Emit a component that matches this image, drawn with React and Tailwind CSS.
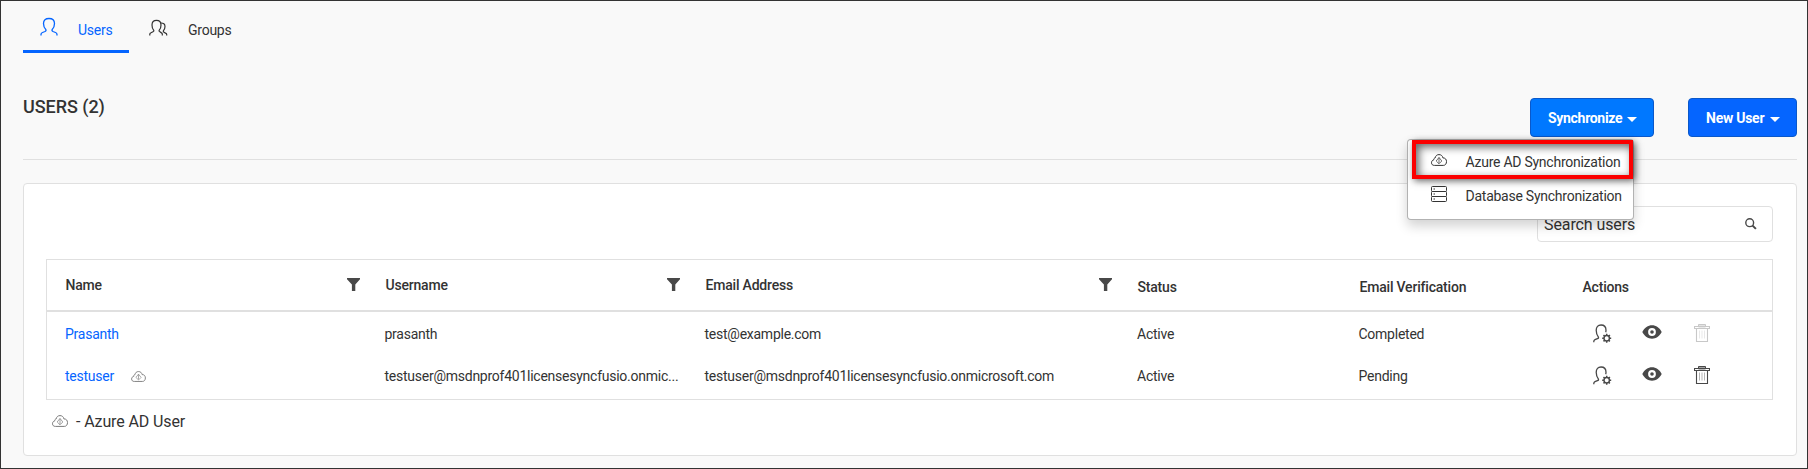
import React from "react";

function UserIcon({ className }) {
  return (
    <svg className={className} width="18" height="20" viewBox="0 0 18 20" fill="none" stroke="currentColor" strokeWidth="1.3">
      <path d="M1 18.600V17.400q0-1.300 1.500-1.900l2.500-1q1.600-.8.800-2C4.600 11.300 3.500 9.500 3.500 6.500 3.500 3 5.500 1.500 9 1.500S14.500 3 14.500 6.500c0 3-1.100 4.800-2.300 6q-.8 1.200.8 2l2.500 1q1.500.6 1.500 1.900v1.200" />
    </svg>
  );
}

function GroupIcon({ className }) {
  return (
    <svg className={className} width="19" height="18" viewBox="0 0 19 18" fill="none" stroke="currentColor" strokeWidth="1.2">
      <path d="M.8 16.500v-1.200q0-1 1.200-1.500l2-1q1.300-.6.6-1.700C3.600 10 3 8.500 3 6 3 2.800 4.600 1.300 7.500 1.300S12 2.800 12 6c0 2.500-.7 4-1.700 5.100q-.7 1.100.6 1.700l1.200.8q1.200.5 1.200 1.500v1.400" />
      <path d="M11.500 4c3-.2 4.500 1 4.500 3.600 0 1.800-.6 3-1.500 4q-.6 1 .5 1.600l1.500.9q1.200.5 1.200 1.300v1.100" />
    </svg>
  );
}

function CloudIcon({ className }) {
  return (
    <svg className={className} viewBox="0 0 16 12" fill="none" stroke="currentColor" strokeWidth="1">
      <path d="M3.400 11.400C1.500 11.400.5 10.300.5 8.800c0-1.600.9-2.700 2.300-2.900-.2-1 .3-1.800 1.400-2C4.600 1.700 6 .6 8 .6s3.600 1.200 3.900 3.300c2.300-.1 3.600 1.500 3.600 3.700s-1.200 3.800-3.200 3.800z" />
      <path d="M8 3.400 5.200 7 8 9.800 10.800 7zM8 3.800v5.400" strokeWidth=".7" />
    </svg>
  );
}

function DatabaseIcon({ className }) {
  return (
    <svg className={className} width="16" height="16" viewBox="0 0 16 16" fill="none" stroke="currentColor">
      <rect x=".5" y=".5" width="15" height="5" rx="1" />
      <rect x=".5" y="5.500" width="15" height="5" rx="1" />
      <rect x=".5" y="10.500" width="15" height="5" rx="1" />
      <path d="M2.500 3h1.500M2.500 8h1.500M2.500 13h1.500" />
    </svg>
  );
}

function SearchIcon({ className }) {
  return (
    <svg className={className} width="12" height="12" viewBox="0 0 12 12" fill="none" stroke="currentColor">
      <circle cx="4.700" cy="4.700" r="3.900" strokeWidth="1.400" />
      <path d="m7.600 7.600 3.300 3.300" strokeWidth="2" />
    </svg>
  );
}

function FilterIcon() {
  return (
    <svg className="mb-0.5 text-[#484848]" width="13" height="13" viewBox="0 0 13 13" fill="currentColor">
      <path d="M0 0h13v1.200L8.300 6.500V13H4.900V6.500L0 1.200z" />
    </svg>
  );
}

function UserGearIcon() {
  return (
    <svg width="19" height="19" viewBox="0 0 19 19" fill="none" stroke="currentColor" strokeWidth="1.3">
      <path d="M.8 18.300v-.9q0-1.200 1.200-1.700l2.400-1q1.700-.7.900-1.900C4.300 11.500 3.200 9.800 3.200 6.300 3.200 3 5 1 8 1s5 2 5 5.300q0 1-.3 2" />
      <circle cx="13.700" cy="14.200" r="2.700" strokeWidth="1.400" />
      <path d="M13.700 9.700v1.700M13.700 17v1.700M9.200 14.200h1.700M16.500 14.200h1.700M10.500 11l1.200 1.200M15.700 16.200l1.200 1.200M16.900 11l-1.200 1.200M11.700 16.200l-1.200 1.200" strokeWidth="1.500" />
    </svg>
  );
}

function EyeIcon() {
  return (
    <svg width="20" height="14" viewBox="0 0 20 14">
      <path d="M.3 7C2.500 2.700 6 .3 10 .3S17.500 2.700 19.700 7C17.500 11.300 14 13.700 10 13.700S2.500 11.300.3 7z" fill="currentColor" />
      <circle cx="10" cy="7" r="3.900" fill="#fff" />
      <circle cx="10" cy="7" r="1.800" fill="currentColor" />
    </svg>
  );
}

function TrashIcon({ className }) {
  return (
    <svg className={className} width="16" height="18" viewBox="0 0 16 18" fill="none" stroke="currentColor">
      <path d="M4.500.5h7v2.400h-7z" fill="currentColor" fillOpacity=".5" />
      <path d="M.5 2.500h15v2H.5zM2.500 4.500v13h11v-13" strokeWidth="1.100" />
      <path d="M5.500 6.500v8M8 6.500v8M10.500 6.500v8" strokeWidth=".8" strokeOpacity=".5" />
    </svg>
  );
}

function Caret({ className }) {
  return <span className={`h-0 w-0 border-x-[5px] border-t-[5px] border-x-transparent border-t-white ${className}`} />;
}

const GRID = "grid grid-cols-[319px_320px_432px_222px_223px_1fr]";

const columns = [
  { label: "Name", filter: true },
  { label: "Username", filter: true },
  { label: "Email Address", filter: true },
  { label: "Status" },
  { label: "Email Verification" },
  { label: "Actions" },
];

const users = [
  { name: "Prasanth", username: "prasanth", email: "test@example.com", verification: "Completed", azure: false },
  {
    name: "testuser",
    username: "testuser@msdnprof401licensesyncfusio.onmic...",
    email: "testuser@msdnprof401licensesyncfusio.onmicrosoft.com",
    verification: "Pending",
    azure: true,
  },
];

function Row({ user }) {
  return (
    <div className={`${GRID} h-[42px] items-center text-sm tracking-[-0.25px]`}>
      <div className="flex items-center pt-0.5 pl-[18px] text-[#0565ff]">
        {user.name}
        {user.azure && <CloudIcon className="ml-[17px] h-[11px] w-[15px] text-[#7a7a7a]" />}
      </div>
      <div className="pt-0.5 pl-[18.500px] whitespace-nowrap">{user.username}</div>
      <div className="pt-0.5 pl-[18.500px]">{user.email}</div>
      <div className="pt-0.5 pl-[19px]">Active</div>
      <div className="pt-0.5 pl-[18.500px]">{user.verification}</div>
      <div className="flex items-center pl-[30px] text-[#484848]">
        <UserGearIcon />
        <span className="mb-0.5 ml-[30px]"><EyeIcon /></span>
        <TrashIcon className={user.azure ? "ml-8" : "ml-8 text-[#c8c8c8]"} />
      </div>
    </div>
  );
}

export default function App() {
  return (
    <div className="flex h-[469px] w-[1808px] flex-col overflow-hidden border border-[#333] bg-[#f9f9f9] pr-2.5 pl-[22px] font-[Roboto,sans-serif] text-sm text-[#333]">
      <nav className="flex h-[52px] tracking-[-0.25px]">
        <div className="flex w-[106px] border-b-3 border-[#0565ff] pl-[17px] text-[#0565ff]">
          <UserIcon className="mt-4" />
          <span className="mt-[19px] ml-5">Users</span>
        </div>
        <div className="flex pl-5">
          <GroupIcon className="mt-[18px]" />
          <span className="mt-[19px] ml-5">Groups</span>
        </div>
      </nav>

      <header className="flex h-[107px] items-start border-b border-[#e0e0e0] pt-[45px]">
        <h1 className="mt-[-5px] text-lg leading-7 font-medium tracking-[-0.05px]">USERS (2)</h1>
        <div className="relative ml-auto">
          <button className="flex h-[39px] w-[124px] items-center rounded border border-[#0a58ca] bg-[#0078ff] pl-[17px] font-bold tracking-[-0.3px] text-white">
            Synchronize
            <Caret className="mt-[3px] ml-[5px]" />
          </button>
          <div className="absolute top-[41px] right-[20px] z-10 h-[81px] w-[227px] rounded-sm border border-black/30 bg-white tracking-[-0.25px] shadow-[0_6px_12px_rgba(0,0,0,0.175)]">
            <div className="ml-1 flex h-[39px] w-[221px] items-center border-4 border-[#fb0000] pl-[15px] shadow-[2px_2px_7px_rgba(0,0,0,0.6),inset_3px_3px_9px_rgba(0,0,0,0.6)]">
              <CloudIcon className="h-3 w-4" />
              <span className="mt-[5px] ml-[18.500px] whitespace-nowrap">Azure AD Synchronization</span>
            </div>
            <div className="flex items-start pt-[7px] pl-[23px]">
              <DatabaseIcon />
              <span className="ml-[18.500px] whitespace-nowrap">Database Synchronization</span>
            </div>
          </div>
        </div>
        <button className="ml-[34px] flex h-[39px] w-[109px] items-center rounded border border-[#0a58ca] bg-[#0565ff] pl-[17px] font-bold tracking-[-0.25px] text-white">
          New User
          <Caret className="mt-[3px] ml-1.5" />
        </button>
      </header>

      <main className="mt-[23px] flex h-[273px] flex-col rounded border border-[#e0e0e0] bg-white pt-[22px] pr-[23px] pl-[22px]">
        <div className="ml-auto flex h-9 w-[236px] items-center justify-between rounded border border-[#e0e0e0] pr-[15px] pl-1.5 text-base tracking-[-0.1px]">
          <span className="pt-0.5">Search users</span>
          <SearchIcon className="text-[#484848]" />
        </div>
        <section className="mt-[17px] h-[141px] border border-[#e0e0e0]">
          <div className={`${GRID} h-[52px] border-b-2 border-[#e0e0e0] font-medium tracking-[-0.2px]`}>
            {columns.map((c) => (
              <div key={c.label} className={`flex items-center justify-between pr-1.5 ${c.label === "Name" ? "pl-[18.500px]" : "pl-[19.500px]"}`}>
                <span className={c.filter ? "" : "pt-[3px]"}>{c.label}</span>
                {c.filter && <FilterIcon />}
              </div>
            ))}
          </div>
          {users.map((u) => (
            <Row key={u.name} user={u} />
          ))}
        </section>
        <div className="mt-2.5 flex items-center pl-1.5 text-base tracking-[-0.12px]">
          <CloudIcon className="mb-0.5 h-3 w-4 text-[#7a7a7a]" />
          <span className="ml-2">- Azure AD User</span>
        </div>
      </main>
    </div>
  );
}
